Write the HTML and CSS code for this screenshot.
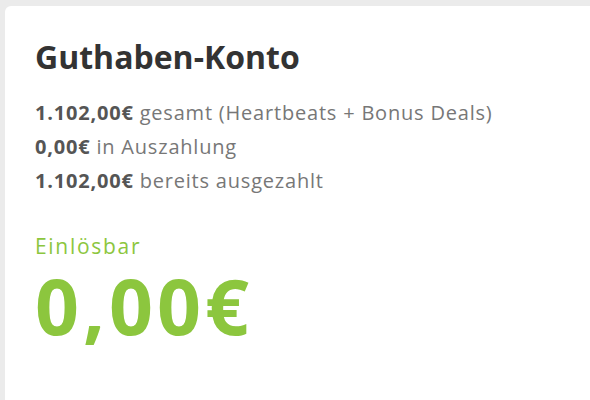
FILE: index.html
```html
<!DOCTYPE html>
<html lang="de">
<head>
    <meta charset="UTF-8">
    <meta name="viewport" content="width=device-width, initial-scale=1.0">
    <title>Guthaben-Konto</title>
    <link rel="stylesheet" href="styles.css">
</head>
<body>
    <div class="card">
        <h2 class="card-title">Guthaben-Konto</h2>

        <div class="summary">
            <div><strong>1.102,00€</strong> gesamt (Heartbeats + Bonus Deals)</div>
            <div><strong>0,00€</strong> in Auszahlung</div>
            <div><strong>1.102,00€</strong> bereits ausgezahlt</div>
        </div>

        <div class="redeem">
            <div class="redeem-label">Einlösbar</div>
            <div class="redeem-amount">0,00€</div>
        </div>
    </div>
</body>
</html>
```

FILE: styles.css
```css
html, body {
    height: 100%;
}
body {
    margin: 0;
    padding: 6px 0 0 5px;
    box-sizing: border-box;
    background-color: #ebebeb;
    font-family: 'Open Sans', 'Noto Sans', sans-serif;
    color: #777;
}
.card {
    height: 100%;
    background-color: white;
    border-radius: 6px 0 0 0;
    padding: 31px 20px 0 30px;
    box-sizing: border-box;
}
.card-title {
    margin: 0;
    font-size: 32px;
    line-height: 40px;
    font-weight: 700;
    color: #333;
}
.summary {
    margin-top: 19px;
    font-size: 20px;
    line-height: 34px;
    letter-spacing: 0.8px;
}
.summary strong {
    color: #555;
    font-weight: 700;
}
.redeem {
    margin-top: 33px;
    color: #8cc63e;
}
.redeem-label {
    font-size: 21px;
    line-height: 30px;
    letter-spacing: 1.7px;
}
.redeem-amount {
    margin-top: 3px;
    font-size: 77px;
    line-height: 84px;
    font-weight: 700;
    letter-spacing: 4px;
}
```
